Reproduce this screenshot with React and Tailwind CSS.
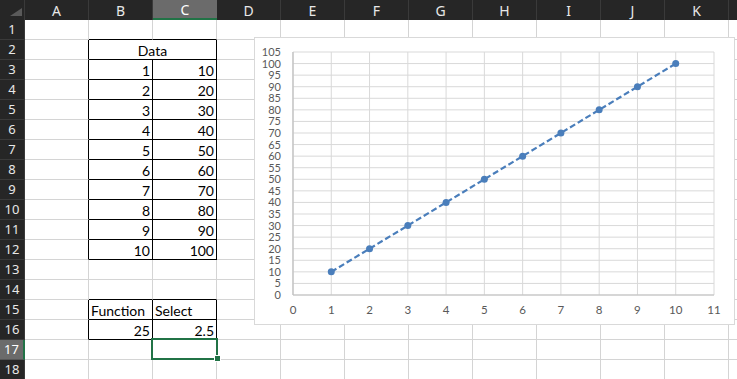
import React from 'react';

const COLS = ['A', 'B', 'C', 'D', 'E', 'F', 'G', 'H', 'I', 'J', 'K'];
const ROWS = Array.from({ length: 18 }, (_, i) => i + 1);

const values = {
  B15: 'Function',
  C15: 'Select',
  B16: '25',
  C16: '2.5',
};
for (let i = 1; i <= 10; i++) {
  values['B' + (i + 2)] = String(i);
  values['C' + (i + 2)] = String(i * 10);
}

const inTable = (r, c) => (c === 'B' || c === 'C') && ((r >= 2 && r <= 12) || r === 15 || r === 16);
const nextCol = (c) => COLS[COLS.indexOf(c) + 1];

function cellClass(r, c) {
  const right = inTable(r, c) || inTable(r, nextCol(c));
  const bottom = inTable(r, c) || inTable(r + 1, c);
  if (right && bottom) return 'border-r border-b border-r-black border-b-black';
  if (right) return 'border-r border-b border-r-black border-b-[#d4d4d4]';
  if (bottom) return 'border-r border-b border-r-[#d4d4d4] border-b-black';
  return 'border-r border-b border-[#d4d4d4]';
}

function Cell({ r, c }) {
  const v = values[c + r];
  const isText = v && isNaN(Number(v));
  return (
    <div className={`w-[64px] h-[20px] shrink-0 flex items-end pb-[1px] leading-none ${isText ? 'justify-start pl-[2px]' : 'justify-end pr-[2px]'} ${cellClass(r, c)}`}>
      {v}
    </div>
  );
}

function Row({ r }) {
  const selected = r === 17;
  return (
    <div className="flex h-[20px]">
      <div className={`w-[25px] shrink-0 flex items-center justify-center text-[13px] ${selected ? 'bg-[#6b6b6b] border-r-2 border-r-[#217346] border-b border-b-[#555] text-white' : 'bg-[#262626] border-b border-b-[#3a3a3a] border-r border-r-[#3a3a3a] text-[#e8e8e8]'}`} style={{ fontFamily: "'Noto Sans', sans-serif" }}>
        {r}
      </div>
      {r === 2 ? (
        <>
          <Cell r={r} c="A" />
          <div className="w-[128px] h-[20px] shrink-0 flex items-end justify-center pb-[1px] leading-none border-r border-b border-black">Data</div>
          {COLS.slice(3).map((c) => <Cell key={c} r={r} c={c} />)}
        </>
      ) : (
        COLS.map((c) => <Cell key={c} r={r} c={c} />)
      )}
      <div className="w-[20px] h-[20px] shrink-0 border-b border-[#d4d4d4]" />
    </div>
  );
}

function Chart() {
  const L = 38, T = 14, R = 459, B = 257;
  const xu = (R - L) / 11;
  const yu = (B - T) / 105;
  const X = (v) => L + v * xu;
  const Y = (v) => B - v * yu;
  const yTicks = Array.from({ length: 22 }, (_, i) => i * 5);
  const xTicks = Array.from({ length: 12 }, (_, i) => i);
  const pts = Array.from({ length: 10 }, (_, i) => [i + 1, (i + 1) * 10]);

  return (
    <div className="absolute left-[254px] top-[37px] w-[481px] h-[288px] bg-white border border-[#d9d9d9]">
      <svg width="479" height="286" className="block" style={{ fontFamily: "Lato, 'Open Sans', sans-serif" }}>
        {yTicks.map((t) => (
          <line key={'h' + t} x1={L} x2={R} y1={Y(t)} y2={Y(t)} stroke="#d9d9d9" strokeWidth="1" />
        ))}
        {xTicks.map((t) => (
          <line key={'v' + t} x1={X(t)} x2={X(t)} y1={T} y2={B} stroke="#d9d9d9" strokeWidth="1" />
        ))}
        <line x1={L} x2={L} y1={T} y2={B} stroke="#bfbfbf" strokeWidth="1.2" />
        <line x1={L} x2={R} y1={B} y2={B} stroke="#bfbfbf" strokeWidth="1.2" />
        {yTicks.map((t) => (
          <text key={'yl' + t} x={26} y={Y(t) + 4} textAnchor="end" fontSize="11" fill="#595959">{t}</text>
        ))}
        {xTicks.map((t) => (
          <text key={'xl' + t} x={X(t)} y={276} textAnchor="middle" fontSize="11.5" fill="#595959">{t}</text>
        ))}
        <polyline
          points={pts.map(([x, y]) => `${X(x)},${Y(y)}`).join(' ')}
          fill="none"
          stroke="#4a7ebb"
          strokeWidth="2.2"
          strokeDasharray="6 3"
        />
        {pts.map(([x, y]) => (
          <circle key={x} cx={X(x)} cy={Y(y)} r="3.5" fill="#4a7ebb" />
        ))}
      </svg>
    </div>
  );
}

export default function App() {
  return (
    <div className="relative w-[737px] h-[379px] overflow-hidden bg-white text-[14px] text-black" style={{ fontFamily: "Lato, 'Liberation Sans', sans-serif" }}>
      <div className="flex h-[20px] bg-[#262626] text-[14px]" style={{ fontFamily: "'Noto Sans', sans-serif" }}>
        <div className="w-[25px] shrink-0 relative border-r border-[#3a3a3a]">
          <div className="absolute left-[10px] top-[8px] w-0 h-0 border-l-[12px] border-l-transparent border-b-[8px] border-b-[#5a5a5a]" />
        </div>
        {COLS.map((c) => (
          <div
            key={c}
            className={`w-[64px] shrink-0 flex items-center justify-center ${c === 'C' ? 'bg-[#6b6b6b] border-b-2 border-b-[#217346] text-white' : 'border-r border-r-[#3a3a3a] text-[#e8e8e8]'}`}
          >
            {c}
          </div>
        ))}
        <div className="w-[20px] shrink-0" />
      </div>
      {ROWS.map((r) => <Row key={r} r={r} />)}
      <Chart />
      <div className="absolute left-[151px] top-[338px] w-[67px] h-[22px] border-2 border-[#217346]" />
      <div className="absolute left-[214px] top-[355px] w-[7px] h-[7px] bg-[#217346] border border-white" />
    </div>
  );
}
